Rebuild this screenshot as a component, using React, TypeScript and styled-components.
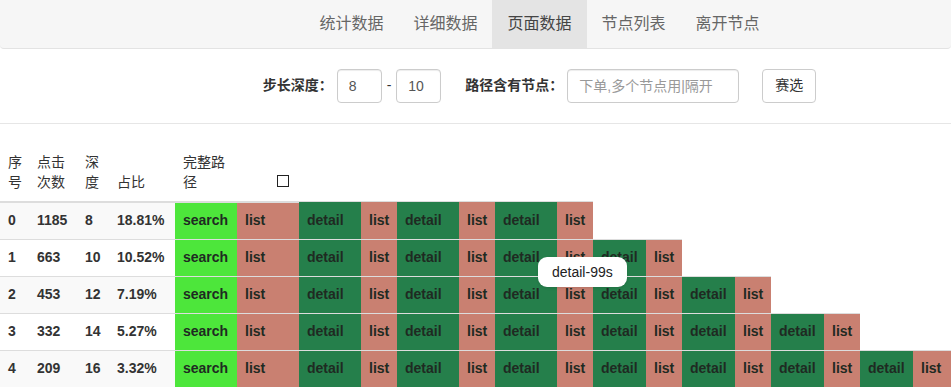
import styled, { createGlobalStyle } from 'styled-components'

const GlobalStyle = createGlobalStyle`
  body {
    margin: 0;
    padding: 0;
    background: #fff;
    font-family: "Liberation Sans", "Noto Sans CJK SC", sans-serif;
    font-size: 14px;
    line-height: 1.42857;
    color: #333;
  }
`

const Page = styled.div`
  width: 951px;
  overflow: hidden;
`

const Navbar = styled.nav`
  display: flex;
  justify-content: center;
  padding-left: 128px;
  height: 48px;
  background: #f6f6f6;
  border-bottom: 1px solid #e3e3e3;
  border-radius: 0 0 4px 4px;
`

const NavLink = styled.a<{ $active?: boolean }>`
  display: block;
  padding: 0 15px;
  line-height: 48px;
  font-size: 16px;
  text-decoration: none;
  color: ${(p) => (p.$active ? '#444' : '#666')};
  background: ${(p) => (p.$active ? '#e4e4e4' : 'transparent')};
`

const FilterBar = styled.form`
  display: flex;
  align-items: center;
  justify-content: center;
  padding: 20px 0 0 128px;
`

const Label = styled.label<{ $gap?: number }>`
  font-weight: bold;
  color: #333;
  margin-left: ${(p) => p.$gap ?? 0}px;
  margin-right: 4px;
  white-space: nowrap;
`

const Input = styled.input<{ $w: number }>`
  box-sizing: border-box;
  width: ${(p) => p.$w}px;
  height: 34px;
  padding: 6px 11px;
  border: 1px solid #ccc;
  border-radius: 4px;
  box-shadow: inset 0 1px 1px rgba(0, 0, 0, 0.075);
  font: inherit;
  color: #555;
  outline: none;

  &::placeholder {
    color: #999;
  }
`

const Dash = styled.span`
  margin: 0 5px;
  color: #333;
`

const Button = styled.button`
  box-sizing: border-box;
  height: 34px;
  margin-left: 23px;
  padding: 6px 12px;
  border: 1px solid #ccc;
  border-radius: 4px;
  background: #fff;
  font: inherit;
  color: #333;
`

const Divider = styled.hr`
  margin: 20px 0 21px;
  border: 0;
  border-top: 1px solid #e6e6e6;
`

const TableWrap = styled.div`
  position: relative;
`

const Table = styled.table`
  width: 951px;
  table-layout: fixed;
  border-collapse: collapse;
  border-spacing: 0;
`

const Th = styled.th`
  padding: 8px;
  text-align: left;
  vertical-align: bottom;
  font-weight: normal;
  color: #333;
  border-bottom: 2px solid #ddd;
`

const InfoCell = styled.td<{ $striped: boolean }>`
  padding: 8px;
  white-space: nowrap;
  font-weight: bold;
  color: #333;
  border-top: 1px solid #ddd;
  background: ${(p) => (p.$striped ? '#f9f9f9' : '#fff')};
`

const nodeColors: Record<string, string> = {
  search: '#4de63b',
  list: '#c98071',
  detail: '#257f4b',
}

const NodeCell = styled.td<{ $node: string }>`
  padding: 8px;
  white-space: nowrap;
  overflow: hidden;
  font-weight: bold;
  color: #1f2a22;
  border-top: 1px solid #ddd;
  background: ${(p) => nodeColors[p.$node]};
`

const Checkbox = styled.input`
  appearance: none;
  width: 12px;
  height: 12px;
  margin: 0 0 0 32px;
  border: 1px solid #222;
  border-radius: 0;
  background: #fff;
`

const Tooltip = styled.div`
  position: absolute;
  left: 538px;
  top: 112px;
  padding: 0 14px;
  line-height: 30px;
  border-radius: 9px;
  background: #fff;
  color: #222;
  box-shadow: 0 1px 3px rgba(0, 0, 0, 0.12);
  white-space: nowrap;
`

const colWidths = [29, 48, 32, 66, 62, 62, 62, 36, 62, 36, 62, 36, 53, 36, 53, 36, 53, 36, 53, 38]

const rows = [
  { id: 0, clicks: 1185, depth: 8, ratio: '18.81%' },
  { id: 1, clicks: 663, depth: 10, ratio: '10.52%' },
  { id: 2, clicks: 453, depth: 12, ratio: '7.19%' },
  { id: 3, clicks: 332, depth: 14, ratio: '5.27%' },
  { id: 4, clicks: 209, depth: 16, ratio: '3.32%' },
]

function buildPath(depth: number) {
  const path = ['search']
  for (let i = 1; i < depth; i++) path.push(i % 2 === 1 ? 'list' : 'detail')
  return path
}

const navItems = ['统计数据', '详细数据', '页面数据', '节点列表', '离开节点']

function App() {
  return (
    <Page>
      <GlobalStyle />
      <Navbar>
        {navItems.map((item) => (
          <NavLink key={item} href="#" $active={item === '页面数据'}>
            {item}
          </NavLink>
        ))}
      </Navbar>

      <FilterBar onSubmit={(e) => e.preventDefault()}>
        <Label>步长深度：</Label>
        <Input $w={45} defaultValue="8" />
        <Dash>-</Dash>
        <Input $w={45} defaultValue="10" />
        <Label $gap={24}>路径含有节点：</Label>
        <Input $w={172} placeholder="下单,多个节点用|隔开" />
        <Button type="submit">赛选</Button>
      </FilterBar>

      <Divider />

      <TableWrap>
        <Table>
          <colgroup>
            {colWidths.map((w, i) => (
              <col key={i} style={{ width: w }} />
            ))}
          </colgroup>
          <thead>
            <tr>
              <Th>序号</Th>
              <Th>点击次数</Th>
              <Th>深度</Th>
              <Th>占比</Th>
              <Th>完整路径</Th>
              <Th>
                <Checkbox type="checkbox" />
              </Th>
            </tr>
          </thead>
          <tbody>
            {rows.map((r, i) => (
              <tr key={r.id}>
                <InfoCell $striped={i % 2 === 0}>{r.id}</InfoCell>
                <InfoCell $striped={i % 2 === 0}>{r.clicks}</InfoCell>
                <InfoCell $striped={i % 2 === 0}>{r.depth}</InfoCell>
                <InfoCell $striped={i % 2 === 0}>{r.ratio}</InfoCell>
                {buildPath(r.depth).map((node, j) => (
                  <NodeCell key={j} $node={node}>
                    {node}
                  </NodeCell>
                ))}
              </tr>
            ))}
          </tbody>
        </Table>
        <Tooltip>detail-99s</Tooltip>
      </TableWrap>
    </Page>
  )
}

export default App
